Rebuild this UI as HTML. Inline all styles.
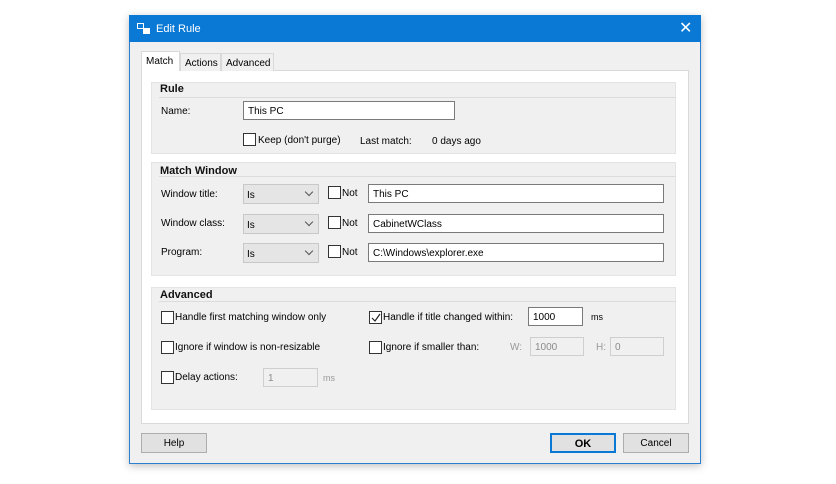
<!DOCTYPE html><html><head><style>
*{box-sizing:border-box;margin:0;padding:0}
body{width:836px;height:484px;background:#fff;font-family:"Liberation Sans",sans-serif;font-size:10px;color:#000;position:relative;overflow:hidden}
.a{position:absolute}
.win{left:129px;top:15px;width:572px;height:449px;background:#f0f0f0;border:1px solid #2b7fd0;box-shadow:0 2px 8px rgba(0,0,0,.25)}
.tb{left:129px;top:15px;width:572px;height:27px;background:#0a79d6;color:#fff;font-size:11px}
.page{left:141px;top:70px;width:548px;height:354px;background:#fff;border:1px solid #d9d9d9}
.tab{top:53px;height:18px;border:1px solid #d9d9d9;border-bottom:none;background:#f0f0f0;font-size:10px;padding:4px 0 0 4px}
.grp{left:151px;width:525px;background:#f0f0f0;border:1px solid #e4e4e4}
.gin{left:159px;width:517px;border-top:1px solid #dcdcdc}
.h{font-weight:bold;font-size:11px;color:#111}
.in{height:19px;border:1px solid #7a7a7a;background:#fff;padding:4px 4px;font-size:10px}
.dis{border-color:#cfcfcf;background:#f0f0f0;color:#8a8a8a}
.cb{width:13px;height:13px;border:1px solid #333;background:#fff}
.cmb{width:76px;height:20px;background:#e5e5e5;border:1px solid #c8c8c8;padding:5px 3px}
.cmb:after{content:"";position:absolute;right:6px;top:4px;width:5px;height:5px;border-right:1px solid #555;border-bottom:1px solid #555;transform:rotate(45deg)}
.btn{top:433px;width:66px;height:20px;background:#e1e1e1;border:1px solid #adadad;text-align:center;padding-top:4px}
</style></head><body>
<div class="a win"></div>
<div class="a tb"><svg class="a" style="left:8px;top:8px" width="14" height="12"><rect x="0.5" y="0.5" width="6" height="5" fill="none" stroke="#fff"/><rect x="6.5" y="5.5" width="6" height="5" fill="#fff" stroke="#fff"/></svg><span class="a" style="left:27px;top:8px">Edit Rule</span><span class="a" style="left:550px;top:3px;font-size:16px">✕</span></div>
<div class="a page"></div>
<div class="a tab" style="left:141px;width:39px;top:51px;height:20px;background:#fff">Match</div>
<div class="a tab" style="left:180px;width:41px">Actions</div>
<div class="a tab" style="left:221px;width:53px">Advanced</div>

<div class="a grp" style="top:82px;height:72px"></div>
<div class="a gin" style="top:97px"></div>
<div class="a h" style="left:160px;top:83px">Rule</div>
<div class="a" style="left:161px;top:106px">Name:</div>
<div class="a in" style="left:243px;top:101px;width:212px">This PC</div>
<div class="a cb" style="left:243px;top:133px"></div>
<div class="a" style="left:258px;top:135px">Keep (don't purge)</div>
<div class="a" style="left:360px;top:136px">Last match:</div>
<div class="a" style="left:432px;top:136px">0 days ago</div>

<div class="a grp" style="top:162px;height:114px"></div>
<div class="a gin" style="top:176px"></div>
<div class="a h" style="left:160px;top:165px">Match Window</div>
<div class="a" style="left:161px;top:189px">Window title:</div>
<div class="a" style="left:161px;top:218px">Window class:</div>
<div class="a" style="left:161px;top:247px">Program:</div>
<div class="a cmb" style="left:243px;top:184px">Is</div>
<div class="a cmb" style="left:243px;top:214px">Is</div>
<div class="a cmb" style="left:243px;top:243px">Is</div>
<div class="a cb" style="left:328px;top:186px"></div><div class="a" style="left:342px;top:188px">Not</div>
<div class="a cb" style="left:328px;top:216px"></div><div class="a" style="left:342px;top:218px">Not</div>
<div class="a cb" style="left:328px;top:245px"></div><div class="a" style="left:342px;top:247px">Not</div>
<div class="a in" style="left:368px;top:184px;width:296px">This PC</div>
<div class="a in" style="left:368px;top:214px;width:296px">CabinetWClass</div>
<div class="a in" style="left:368px;top:243px;width:296px">C:\Windows\explorer.exe</div>

<div class="a grp" style="top:287px;height:123px"></div>
<div class="a gin" style="top:301px"></div>
<div class="a h" style="left:160px;top:289px">Advanced</div>
<div class="a cb" style="left:161px;top:311px"></div><div class="a" style="left:175px;top:312px">Handle first matching window only</div>
<div class="a cb" style="left:161px;top:341px"></div><div class="a" style="left:175px;top:342px">Ignore if window is non-resizable</div>
<div class="a cb" style="left:161px;top:371px"></div><div class="a" style="left:175px;top:372px">Delay actions:</div>
<div class="a in dis" style="left:263px;top:368px;width:55px">1</div><div class="a" style="left:323px;top:373px;color:#999;font-size:9px">ms</div>
<div class="a cb" style="left:369px;top:311px"><svg class="a" style="left:1px;top:1px" width="10" height="10"><path d="M1 5 L4 8 L9 1" fill="none" stroke="#222" stroke-width="1.2"/></svg></div>
<div class="a" style="left:383px;top:312px">Handle if title changed within:</div>
<div class="a in" style="left:528px;top:307px;width:55px">1000</div><div class="a" style="left:591px;top:312px;font-size:9px">ms</div>
<div class="a cb" style="left:369px;top:341px"></div><div class="a" style="left:383px;top:342px">Ignore if smaller than:</div>
<div class="a" style="left:510px;top:342px;color:#999">W:</div>
<div class="a in dis" style="left:530px;top:337px;width:54px">1000</div>
<div class="a" style="left:596px;top:342px;color:#999">H:</div>
<div class="a in dis" style="left:610px;top:337px;width:54px">0</div>

<div class="a btn" style="left:141px">Help</div>
<div class="a btn" style="left:550px;border:2px solid #0a79d6;font-weight:bold;font-size:11px;padding-top:3px">OK</div>
<div class="a btn" style="left:623px">Cancel</div>
</body></html>
